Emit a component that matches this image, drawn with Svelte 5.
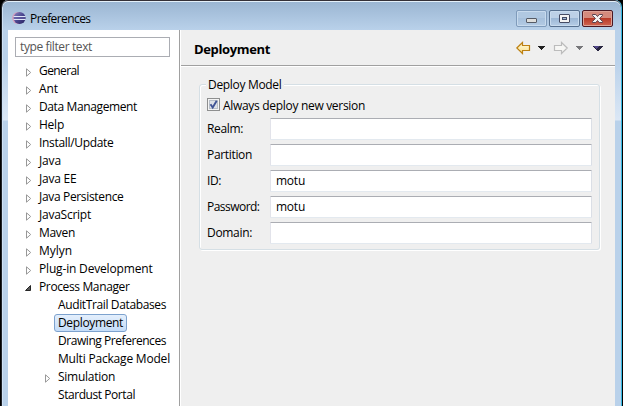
<script>
  const tree = [
    { label: 'General', width: 40, state: 'closed' },
    { label: 'Ant', width: 19, state: 'closed' },
    { label: 'Data Management', width: 98, state: 'closed' },
    { label: 'Help', width: 25, state: 'closed' },
    { label: 'Install/Update', width: 74.5, state: 'closed' },
    { label: 'Java', width: 22, state: 'closed' },
    { label: 'Java EE', width: 37.5, state: 'closed' },
    { label: 'Java Persistence', width: 84.5, state: 'closed' },
    { label: 'JavaScript', width: 52, state: 'closed' },
    { label: 'Maven', width: 36, state: 'closed' },
    { label: 'Mylyn', width: 33, state: 'closed' },
    { label: 'Plug-in Development', width: 113.5, state: 'closed' },
    { label: 'Process Manager', width: 90.5, state: 'open' },
    { label: 'AuditTrail Databases', width: 108, child: true },
    { label: 'Deployment', width: 65, child: true, selected: true },
    { label: 'Drawing Preferences', width: 108, child: true },
    { label: 'Multi Package Model', width: 112, child: true },
    { label: 'Simulation', width: 57, child: true, state: 'closed' },
    { label: 'Stardust Portal', width: 77, child: true }
  ];
  const fields = [
    { label: 'Realm:', width: 36, value: '' },
    { label: 'Partition', width: 45, value: '' },
    { label: 'ID:', width: 14, value: 'motu' },
    { label: 'Password:', width: 52.5, value: 'motu' },
    { label: 'Domain:', width: 45, value: '' }
  ];

  // Spreads the letters so that a label takes its nominal dialog width.
  function fit(node, width) {
    const natural = node.getBoundingClientRect().width;
    node.style.letterSpacing = `${(width - natural) / node.textContent.length}px`;
  }
</script>

<div class="window">
  <header class="titlebar">
    <svg class="logo" width="14" height="14" viewBox="0 0 14 14">
      <defs>
        <linearGradient id="ball" x1="0" y1="0" x2="1" y2="1">
          <stop offset="0" stop-color="#8d86c0" /><stop offset=".5" stop-color="#4a4690" /><stop offset="1" stop-color="#25205e" />
        </linearGradient>
      </defs>
      <circle cx="6.200" cy="7" r="6" fill="#d59ab8" />
      <circle cx="7.600" cy="7" r="6" fill="url(#ball)" />
      <path d="M1.600 5.500h12M1.600 8.500h12" stroke="#dfe5f7" stroke-width="1" />
      <path d="M2 7h11.500" stroke="#6d68ad" stroke-width="1" />
    </svg>
    <span class="title"><span use:fit={60.5}>Preferences</span></span>
    <div class="controls">
      <button aria-label="Minimize"><svg width="29" height="15"><rect x="9.500" y="7.500" width="10" height="4" rx=".5" fill="#dededc" stroke="#555b66" /></svg></button>
      <button aria-label="Maximize"><svg width="29" height="15"><rect x="9.500" y="3.500" width="10" height="8" rx=".5" fill="#f3f3f3" stroke="#454c64" /><rect x="12.500" y="6.500" width="4" height="2" fill="#9fb9d8" stroke="#454c64" /></svg></button>
      <button aria-label="Close" class="close"><svg width="29" height="15"><path d="M9.500 3.500h3.300l1.700 2 1.700-2h3.300v1L16.600 7.500l2.900 3v1h-3.300l-1.700-2-1.700 2H9.500v-1l2.900-3-2.900-3z" fill="#f5f3f3" stroke="#5a4350" /></svg></button>
    </div>
  </header>

  <div class="body">
    <aside>
      <div class="filter"><span use:fit={72}>type filter text</span></div>
      <ul>
        {#each tree as item}
          <li class:child={item.child}>
            <span class="twist">
              {#if item.state === 'closed'}
                <svg width="6" height="9"><path d="M.5 .8v7.400L4.700 4.500z" fill="#fff" stroke="#989898" /></svg>
              {:else if item.state === 'open'}
                <svg class="open" width="6" height="6"><path d="M5.500 .5v5h-5z" fill="#595959" stroke="#262626" /></svg>
              {/if}
            </span>
            <span class="node" class:selected={item.selected}><span use:fit={item.width}>{item.label}</span></span>
          </li>
        {/each}
      </ul>
    </aside>

    <main>
      <div class="heading">
        <h1><span use:fit={76}>Deployment</span></h1>
        <svg class="nav" width="90" height="16" viewBox="0 0 90 16">
          <defs>
            <linearGradient id="gold" x1="0" y1="0" x2="0" y2="1"><stop offset="0" stop-color="#fffbe0" /><stop offset="1" stop-color="#fbe08a" /></linearGradient>
          </defs>
          <path d="M.8 8 6.500 2.500v3h7v5h-7v3z" fill="url(#gold)" stroke="#bd8012" stroke-width="1.200" />
          <path d="M22 6h7v1h-1v1h-1v1h-1v1h-1V9h-1V8h-1V7h-1z" fill="#202020" />
          <path d="M51.200 8 45.500 2.500v3h-7v5h7v3z" fill="#f7f7f5" stroke="#bcbcbc" stroke-width="1.200" />
          <path d="M60 6h7v1h-1v1h-1v1h-1v1h-1V9h-1V8h-1V7h-1z" fill="#77777a" />
          <path d="M77 6h10v1h-1v1h-1v1h-1v1h-1v1h-2v-1h-1V9h-1V8h-1V7h-1z" fill="#27243f" />
          <path d="M78 6h5v1h-1v1h-1v1h-1V8h-1V7h-1z" fill="#514788" />
        </svg>
      </div>

      <section class="group">
        <div class="legend"><span use:fit={73.5}>Deploy Model</span></div>
        <div class="check">
          <svg width="13" height="13">
            <rect x=".5" y=".5" width="12" height="12" fill="#f4f4f4" stroke="#8e8f8f" />
            <rect x="2.500" y="2.500" width="8" height="8" fill="#dde1e7" stroke="#b8bfc9" />
            <path d="M3.500 6.300 5.700 9.500 9.700 2.800" fill="none" stroke="#405495" stroke-width="1.900" />
          </svg>
          <span use:fit={142}>Always deploy new version</span>
        </div>
        {#each fields as field}
          <div class="row">
            <div class="label"><span use:fit={field.width}>{field.label}</span></div>
            <div class="input">{#if field.value}<span use:fit={29}>{field.value}</span>{/if}</div>
          </div>
        {/each}
      </section>
    </main>
  </div>
</div>

<style>
  :global(body) { margin: 0; background: #000; overflow: hidden; }
  * { box-sizing: border-box; }
  .window {
    width: 621px; height: 406px; margin-left: 1px; padding: 0 6px 0 6px;
    border: solid #35b8e2; border-width: 0 1px 0 0; border-left: 1px solid #20242c;
    border-radius: 7px 7px 0 0; box-shadow: inset 0 1px #343037, inset 0 2px #e4f0fa, inset 1px 0 #cfe2f5;
    background:
      linear-gradient(#99b4d1, #b9d1ea 30px, #b9d1ea 60px, #dbe7f5 120px, #b9d1ea 121px);
    font: 12px/18px "Open Sans", "Noto Sans", sans-serif; color: #000;
    white-space: nowrap;
  }
  .titlebar { height: 30px; display: flex; padding: 0 2px 0 4px; }
  .logo { margin-top: 11px; }
  .title { margin: 10px 0 0 4px; }
  .controls { margin: 10px 0 0 auto; display: flex; gap: 2px; }
  button {
    width: 31px; height: 17px; padding: 0; border: 1px solid #57708f; border-radius: 2px;
    box-shadow: inset 0 0 0 1px #c8dbee;
    background: linear-gradient(#bdd1e7 50%, #9db8d6 50%, #b6cde6);
  }
  button:first-child { border-color: #7f9bbb; background: linear-gradient(#b0c8e1 50%, #a6c0dc 50%, #b3cbe4); }
  button svg { display: block; }
  .close { border-color: #4b1722; box-shadow: inset 0 0 0 1px #dda397; background: linear-gradient(#d58a7d 45%, #b93a28 50%, #cf6553); }
  .body { display: flex; height: 376px; }
  aside { width: 173px; background: #fff; border-right: 1px solid #a0a0a0; overflow: hidden; }
  .filter {
    width: 155px; height: 20px; margin: 7px 0 5px 7px; padding-left: 4px;
    border: 1px solid #abadb3; color: #555;
  }
  ul { list-style: none; margin: 0; padding: 0; }
  li { display: flex; height: 18px; padding-left: 18px; }
  li.child { padding-left: 37px; }
  .twist { width: 9px; padding-top: 6px; display: flex; }
  .open { margin: 1px 0 0 -1px; }
  .node { height: 18px; border: 1px solid transparent; padding: 0 3px; line-height: 16px; }
  .selected { border-color: #7da2ce; border-radius: 3px; background: linear-gradient(#e4effc, #c4dcf8); }
  main { flex: 1; background: #efefef; border-left: 1px solid #fff; }
  .heading {
    height: 37px; border-bottom: 1px solid #fff; box-shadow: inset 0 -1px #a0a0a0;
    display: flex; justify-content: space-between; padding: 0 9px 0 13px;
  }
  h1 { margin: 10px 0 0; font-size: 13px; line-height: 18px; font-weight: 700; }
  .nav { margin-top: 10px; }
  .group {
    position: relative; margin: 17px 15px 0 18px; height: 166px; padding: 13px 7px 0 7px;
    border: 1px solid #d5dfe5; border-radius: 3px; box-shadow: inset 1px 1px #fff, 1px 1px #fff;
  }
  .legend { position: absolute; left: 6px; top: -9px; background: #efefef; padding: 0 2px; }
  .check { display: flex; height: 20px; gap: 3px; line-height: 16px; }
  .check svg { flex: none; }
  .row { display: flex; height: 22px; margin-bottom: 4px; }
  .label { width: 63px; line-height: 22px; }
  .input {
    width: 322px; border: 1px solid #e2e3ea; border-color: #abadb3 #dbdfe6 #e3e9ef #e2e3ea;
    border-radius: 1px; background: #fff; padding-left: 5px; line-height: 20px;
  }
</style>
